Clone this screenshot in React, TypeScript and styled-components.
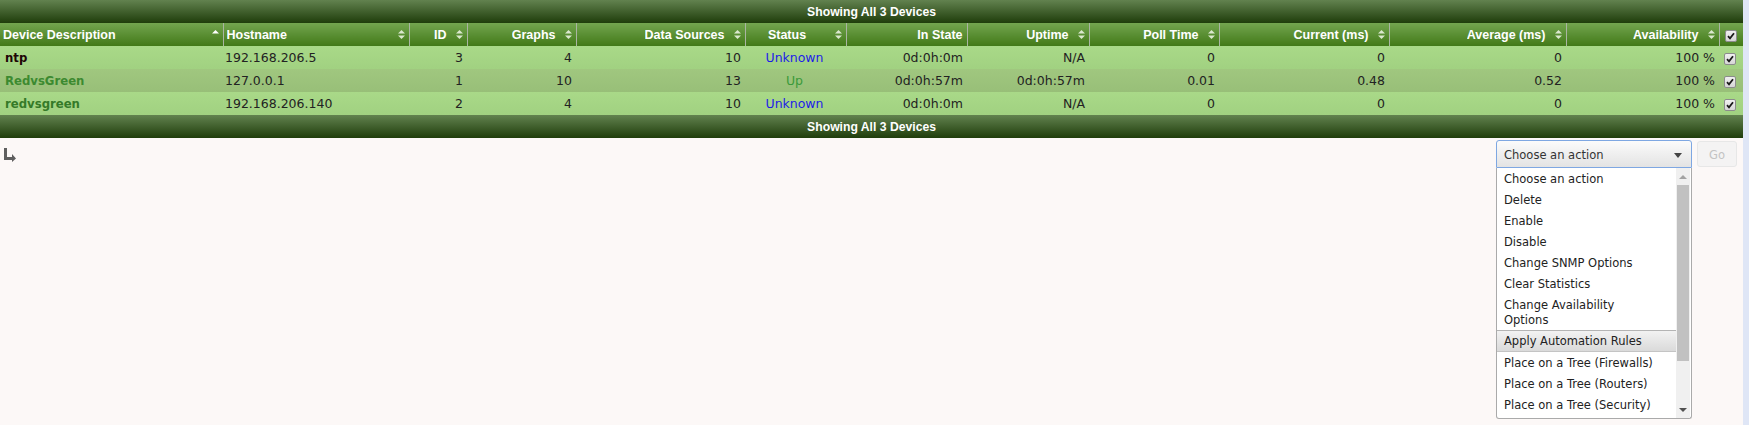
import React from 'react';
import styled, { createGlobalStyle } from 'styled-components';

const GlobalStyle = createGlobalStyle`
  html, body {
    margin: 0;
    padding: 0;
    background: #fcf8f7;
    font-family: 'DejaVu Sans', Verdana, sans-serif;
  }
`;

const Page = styled.div`
  min-height: 100vh;
  border-right: 6px solid #dfe6f6;
  background: #fcf8f7;
`;

const Table = styled.table`
  width: 100%;
  table-layout: fixed;
  border-collapse: collapse;
  border-spacing: 0;
`;

const BannerCell = styled.td`
  height: 23px;
  padding: 0;
  text-align: center;
  color: #fff;
  font-family: 'Liberation Sans', Arial, sans-serif;
  font-weight: bold;
  font-size: 12.2px;
  background: linear-gradient(#62824f, #1f3d0b);
`;

const HeadCell = styled.th<{ $last?: boolean }>`
  height: 23px;
  padding: 0 4px 0 3px;
  color: #fff;
  font-family: 'Liberation Sans', Arial, sans-serif;
  font-weight: bold;
  font-size: 12.5px;
  white-space: nowrap;
  background: linear-gradient(#73a54f, #427918);
  border-right: ${p => (p.$last ? 'none' : '1px solid #aab5a2')};
`;

const HeadInner = styled.div<{ $align: 'left' | 'right' | 'center' }>`
  display: flex;
  align-items: center;
  gap: 9px;
  justify-content: ${p => (p.$align === 'right' ? 'flex-end' : 'flex-start')};
`;

const HeadText = styled.span<{ $align: 'left' | 'right' | 'center' }>`
  flex: ${p => (p.$align === 'right' ? '0 0 auto' : '1 1 auto')};
  text-align: ${p => p.$align};
  overflow: hidden;
`;

const Row = styled.tr<{ $alt: boolean }>`
  background: ${p =>
    p.$alt
      ? 'linear-gradient(#a0c77f, #98bf78)'
      : 'linear-gradient(#a9d988, #a1d181)'};
`;

const Cell = styled.td<{ $align?: 'left' | 'right' | 'center'; $pl?: number }>`
  height: 23px;
  padding: 0 4px 0 ${p => p.$pl ?? 2}px;
  font-size: 12.5px;
  color: #222;
  white-space: nowrap;
  text-align: ${p => p.$align ?? 'left'};
`;

const NameLink = styled.span<{ $color: string }>`
  font-weight: bold;
  font-size: 11.7px;
  color: ${p => p.$color};
`;

const StatusText = styled.span<{ $up: boolean }>`
  color: ${p => (p.$up ? '#3a9a3a' : '#1c1ce8')};
`;

const Check = styled.span`
  display: inline-flex;
  align-items: center;
  justify-content: center;
  width: 10px;
  height: 10px;
  border: 1px solid #8c8c8c;
  border-radius: 2px;
  background: linear-gradient(#f0f0f0, #d6d6d6);
  vertical-align: middle;
`;

const CheckCell = styled.td`
  padding: 0 0 0 5px;
  height: 23px;
`;

const CheckHead = styled.th`
  padding: 0 0 0 5px;
  height: 23px;
  text-align: left;
  background: linear-gradient(#73a54f, #427918);
`;

const ActionBar = styled.div`
  display: flex;
  justify-content: space-between;
  align-items: flex-start;
  padding: 2px 6px 0 4px;
`;

const ArrowIcon = styled.svg`
  margin-top: 8px;
  display: block;
`;

const ActionGroup = styled.div`
  display: flex;
  align-items: flex-start;
  gap: 5px;
`;

const SelectWrap = styled.div`
  position: relative;
  width: 196px;
`;

const SelectBox = styled.div`
  box-sizing: border-box;
  height: 28px;
  display: flex;
  align-items: center;
  justify-content: space-between;
  padding: 2px 9px 0 7px;
  border: 1px solid #7ea7e2;
  border-radius: 3px 3px 0 0;
  background: linear-gradient(#fbfbfb, #e3e3e3);
  color: #333;
  font-size: 11.5px;
`;

const Menu = styled.div`
  position: absolute;
  top: 100%;
  left: 0;
  width: 100%;
  height: 251px;
  box-sizing: border-box;
  display: flex;
  background: #fff;
  border: 1px solid #aaa;
  border-top: none;
  border-radius: 0 0 3px 3px;
  overflow: hidden;
  z-index: 10;
`;

const OptionList = styled.ul`
  flex: 1;
  margin: 0;
  padding: 0;
  list-style: none;
`;

const Option = styled.li<{ $active?: boolean }>`
  padding: ${p => (p.$active ? '3px 7px 2px' : '4px 7px 2px')};
  line-height: 15px;
  font-size: 11.5px;
  color: #222;
  white-space: nowrap;
  border-top: ${p => (p.$active ? '1px solid #b4b4b4' : 'none')};
  border-bottom: ${p => (p.$active ? '1px solid #c4c4c4' : 'none')};
  background: ${p => (p.$active ? 'linear-gradient(#f2f2f2, #dadada)' : 'transparent')};
`;

const ScrollTrack = styled.div`
  width: 14px;
  display: flex;
  flex-direction: column;
  align-items: center;
  background: #f0f0f0;
  margin-right: 1px;
`;

const ScrollArrow = styled.div<{ $down?: boolean }>`
  height: 17px;
  width: 100%;
  display: flex;
  align-items: center;
  justify-content: center;
  &::after {
    content: '';
    border-left: 4px solid transparent;
    border-right: 4px solid transparent;
    ${p =>
      p.$down
        ? 'border-top: 4px solid #505050;'
        : 'border-bottom: 4px solid #a3a3a3;'}
  }
`;

const ScrollThumb = styled.div`
  width: 12px;
  height: 176px;
  background: #c1c1c1;
`;

const ScrollSpace = styled.div`
  flex: 1;
`;

const GoButton = styled.div`
  margin-top: 1px;
  width: 40px;
  height: 26px;
  box-sizing: border-box;
  display: flex;
  align-items: center;
  justify-content: center;
  padding-top: 1px;
  border: 1px solid #e7e7e7;
  border-radius: 3px;
  background: #f4f3f3;
  color: #c3c3c3;
  font-size: 11.5px;
`;

type Align = 'left' | 'right' | 'center';

const SortIcon: React.FC<{ single?: boolean }> = ({ single }) => (
  <svg width="7" height="9" viewBox="0 0 7 9" style={{ flex: '0 0 auto', display: 'block' }}>
    <polygon points="0,3.5 3.5,0 7,3.5" fill={single ? '#ffffff' : '#dbe8cf'} />
    {!single && <polygon points="0,5.5 3.5,9 7,5.5" fill="#dbe8cf" />}
  </svg>
);

const CheckMark: React.FC = () => (
  <Check>
    <svg width="8" height="8" viewBox="0 0 8 8">
      <path d="M1 4.2 L3 6.3 L7 1.2" stroke="#1a1a1a" strokeWidth="1.8" fill="none" />
    </svg>
  </Check>
);

const columns: { title: string; width: number; align: Align; sort: 'none' | 'single' | 'double' }[] = [
  { title: 'Device Description', width: 223, align: 'left', sort: 'single' },
  { title: 'Hostname', width: 186, align: 'left', sort: 'double' },
  { title: 'ID', width: 58, align: 'right', sort: 'double' },
  { title: 'Graphs', width: 109, align: 'right', sort: 'double' },
  { title: 'Data Sources', width: 169, align: 'right', sort: 'double' },
  { title: 'Status', width: 101, align: 'center', sort: 'double' },
  { title: 'In State', width: 121, align: 'right', sort: 'none' },
  { title: 'Uptime', width: 122, align: 'right', sort: 'double' },
  { title: 'Poll Time', width: 130, align: 'right', sort: 'double' },
  { title: 'Current (ms)', width: 170, align: 'right', sort: 'double' },
  { title: 'Average (ms)', width: 177, align: 'right', sort: 'double' },
  { title: 'Availability', width: 153, align: 'right', sort: 'double' },
];

const devices = [
  { name: 'ntp', color: '#1e0606', host: '192.168.206.5', id: 3, graphs: 4, ds: 10, status: 'Unknown', inState: '0d:0h:0m', uptime: 'N/A', poll: '0', cur: '0', avg: '0', avail: '100 %' },
  { name: 'RedvsGreen', color: '#3c8a30', host: '127.0.0.1', id: 1, graphs: 10, ds: 13, status: 'Up', inState: '0d:0h:57m', uptime: '0d:0h:57m', poll: '0.01', cur: '0.48', avg: '0.52', avail: '100 %' },
  { name: 'redvsgreen', color: '#357a28', host: '192.168.206.140', id: 2, graphs: 4, ds: 10, status: 'Unknown', inState: '0d:0h:0m', uptime: 'N/A', poll: '0', cur: '0', avg: '0', avail: '100 %' },
];

const actions = [
  'Choose an action',
  'Delete',
  'Enable',
  'Disable',
  'Change SNMP Options',
  'Clear Statistics',
  'Change Availability|Options',
  'Apply Automation Rules',
  'Place on a Tree (Firewalls)',
  'Place on a Tree (Routers)',
  'Place on a Tree (Security)',
];

const App: React.FC = () => {
  return (
    <Page>
      <GlobalStyle />
      <Table>
        <colgroup>
          {columns.map(c => (
            <col key={c.title} style={{ width: c.width }} />
          ))}
          <col style={{ width: 24 }} />
        </colgroup>
        <thead>
          <tr>
            <BannerCell colSpan={13}>Showing All 3 Devices</BannerCell>
          </tr>
          <tr>
            {columns.map(c => (
              <HeadCell key={c.title}>
                <HeadInner $align={c.align}>
                  <HeadText $align={c.align}>{c.title}</HeadText>
                  {c.sort !== 'none' && <SortIcon single={c.sort === 'single'} />}
                </HeadInner>
              </HeadCell>
            ))}
            <CheckHead>
              <CheckMark />
            </CheckHead>
          </tr>
        </thead>
        <tbody>
          {devices.map((d, i) => (
            <Row key={d.host} $alt={i % 2 === 1}>
              <Cell $pl={5}>
                <NameLink $color={d.color}>{d.name}</NameLink>
              </Cell>
              <Cell>{d.host}</Cell>
              <Cell $align="right">{d.id}</Cell>
              <Cell $align="right">{d.graphs}</Cell>
              <Cell $align="right">{d.ds}</Cell>
              <Cell $align="center">
                <StatusText $up={d.status === 'Up'}>{d.status}</StatusText>
              </Cell>
              <Cell $align="right">{d.inState}</Cell>
              <Cell $align="right">{d.uptime}</Cell>
              <Cell $align="right">{d.poll}</Cell>
              <Cell $align="right">{d.cur}</Cell>
              <Cell $align="right">{d.avg}</Cell>
              <Cell $align="right">{d.avail}</Cell>
              <CheckCell>
                <CheckMark />
              </CheckCell>
            </Row>
          ))}
        </tbody>
        <tfoot>
          <tr>
            <BannerCell colSpan={13}>Showing All 3 Devices</BannerCell>
          </tr>
        </tfoot>
      </Table>

      <ActionBar>
        <ArrowIcon width="13" height="14" viewBox="0 0 13 14">
          <path d="M0 0 H3 V9 H8 V6 L12 10.5 L8 14 V12 H0 Z" fill="#5f5f5f" />
        </ArrowIcon>
        <ActionGroup>
          <SelectWrap>
            <SelectBox>
              <span>Choose an action</span>
              <svg width="8" height="5" viewBox="0 0 8 5">
                <polygon points="0,0 8,0 4,5" fill="#444" />
              </svg>
            </SelectBox>
            <Menu>
              <OptionList>
                {actions.map(a => (
                  <Option key={a} $active={a === 'Apply Automation Rules'}>
                    {a.split('|').map((part, k) => (
                      <React.Fragment key={part}>
                        {k > 0 && <br />}
                        {part}
                      </React.Fragment>
                    ))}
                  </Option>
                ))}
              </OptionList>
              <ScrollTrack>
                <ScrollArrow />
                <ScrollThumb />
                <ScrollSpace />
                <ScrollArrow $down />
              </ScrollTrack>
            </Menu>
          </SelectWrap>
          <GoButton>Go</GoButton>
        </ActionGroup>
      </ActionBar>
    </Page>
  );
};

export default App;
